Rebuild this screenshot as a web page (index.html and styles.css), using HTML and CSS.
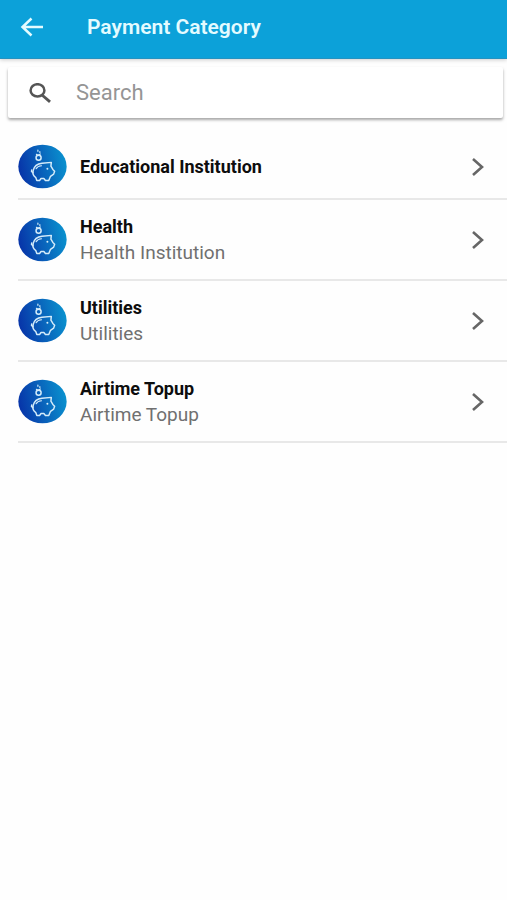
FILE: index.html
```html
<!DOCTYPE html>
<html lang="en">
<head>
<meta charset="utf-8">
<meta name="viewport" content="width=device-width, initial-scale=1">
<title>Payment Category</title>
<link rel="stylesheet" href="styles.css">
</head>
<body>
<svg width="0" height="0" class="defs" aria-hidden="true">
  <defs>
    <linearGradient id="disc" x1="0" y1="0.6" x2="1" y2="0.4">
      <stop offset="0" stop-color="#0733a8"/>
      <stop offset="0.5" stop-color="#0963bb"/>
      <stop offset="1" stop-color="#0a92cf"/>
    </linearGradient>
    <symbol id="piggy" viewBox="0 0 50 46">
      <ellipse cx="25" cy="23" rx="24.700" ry="22.300" fill="url(#disc)"/>
      <g fill="none" stroke="#d5ecfa" stroke-width="1.500" stroke-linejoin="round" stroke-linecap="round">
        <path d="M15.500 27C16.500 22.800 20 20.200 24.500 19.700L34 18.800L33.600 22.700L35.600 26L37.400 27.800L36.400 30.800L33.200 33L31.400 37.300H28L26.400 35.300H23.500L22 37.300H19.200L18.200 34.400C15.600 32.400 14.700 29.600 15.500 27Z"/>
        <path d="M15.200 29L13.800 28.300L14 26.500"/>
        <path d="M18.500 25.200C19.500 23.400 21.500 22.400 24 22.200" stroke-width="1.200"/>
        <circle cx="21" cy="14" r="2.600"/>
        <path d="M18.800 10.600L20.600 11.600L22.800 10.200M20.300 6.200V7.500M22.300 7.800V8.600" stroke-width="1.200"/>
      </g>
      <circle cx="30" cy="25.400" r="1" fill="#d5ecfa"/>
    </symbol>
    <symbol id="chevron" viewBox="0 0 14 20">
      <path d="M2 2L11 10L2 18" fill="none" stroke="#666" stroke-width="2.600"/>
    </symbol>
  </defs>
</svg>
<header class="bar">
  <button class="back" type="button" aria-label="Back">
    <svg width="24" height="20" viewBox="0 0 24 20" aria-hidden="true"><path d="M23 10H3M11.500 1.500L2.500 10L11.500 18.500" fill="none" stroke="#e4fbff" stroke-width="2.500"/></svg>
  </button>
  <h1 class="title">Payment Category</h1>
</header>
<main>
  <label class="search">
    <svg width="22" height="20" viewBox="0 0 22 20" aria-hidden="true"><ellipse cx="8.500" cy="7.400" rx="6.900" ry="6.200" fill="none" stroke="#555" stroke-width="2.500"/><path d="M13 12L21 18.800" stroke="#555" stroke-width="2.900"/></svg>
    <input class="field" type="search" placeholder="Search" aria-label="Search">
  </label>
  <ul class="list">
    <li><a class="row short" href="#">
      <svg class="avatar" aria-hidden="true"><use href="#piggy"/></svg>
      <span class="text"><strong class="name">Educational Institution</strong></span>
      <svg class="chevron" aria-hidden="true"><use href="#chevron"/></svg>
    </a></li>
    <li><a class="row" href="#">
      <svg class="avatar" aria-hidden="true"><use href="#piggy"/></svg>
      <span class="text"><strong class="name">Health</strong><span class="note">Health Institution</span></span>
      <svg class="chevron" aria-hidden="true"><use href="#chevron"/></svg>
    </a></li>
    <li><a class="row" href="#">
      <svg class="avatar" aria-hidden="true"><use href="#piggy"/></svg>
      <span class="text"><strong class="name">Utilities</strong><span class="note">Utilities</span></span>
      <svg class="chevron" aria-hidden="true"><use href="#chevron"/></svg>
    </a></li>
    <li><a class="row" href="#">
      <svg class="avatar" aria-hidden="true"><use href="#piggy"/></svg>
      <span class="text"><strong class="name">Airtime Topup</strong><span class="note">Airtime Topup</span></span>
      <svg class="chevron" aria-hidden="true"><use href="#chevron"/></svg>
    </a></li>
  </ul>
</main>
</body>
</html>
```
FILE: styles.css
```css
* {
  box-sizing: border-box;
}

body {
  margin: 0;
  background: #fefefe;
  font-family: Roboto, "Liberation Sans", sans-serif;
}

.defs {
  position: absolute;
}

.bar {
  display: flex;
  align-items: center;
  gap: 43px;
  height: 59px;
  padding: 0 20px 4px;
  background: #0ca1d9;
  border-bottom: 1px solid #2592c0;
  box-shadow: 0 1px 4px rgba(0, 0, 0, 0.2);
}

.back {
  display: flex;
  padding: 0;
  border: 0;
  background: none;
}

.title {
  margin: 0;
  color: #e4fbff;
  font-size: 21px;
  line-height: 24px;
  font-weight: 600;
}

.search {
  display: flex;
  align-items: center;
  gap: 25px;
  height: 51px;
  margin: 8px 4px 0 8px;
  padding: 0 21px;
  background: #fff;
  border-radius: 2px;
  box-shadow: 0 2px 3px rgba(0, 0, 0, 0.35);
}

.field {
  flex: 1;
  min-width: 0;
  padding: 0;
  border: 0;
  outline: 0;
  background: none;
  color: #333;
  font: 400 22px/26px Roboto, "Liberation Sans", sans-serif;
}

.field::placeholder {
  color: #959595;
  opacity: 1;
}

.list {
  margin: 17px 0 0 18px;
  padding: 0;
  list-style: none;
}

.row {
  display: flex;
  align-items: center;
  gap: 13px;
  min-height: 81px;
  padding-right: 22px;
  border-bottom: 2px solid #e8e8e8;
  text-decoration: none;
}

.row.short {
  min-height: 65px;
}

.avatar {
  flex: none;
  width: 49px;
  height: 45px;
}

.text {
  display: flex;
  flex: 1;
  flex-direction: column;
}

.name,
.note {
  line-height: 26px;
}

.name {
  color: #0d0d0d;
  font-size: 18px;
  font-weight: 700;
}

.note {
  color: #707070;
  font-size: 19px;
}

.chevron {
  flex: none;
  width: 14px;
  height: 20px;
}
```
